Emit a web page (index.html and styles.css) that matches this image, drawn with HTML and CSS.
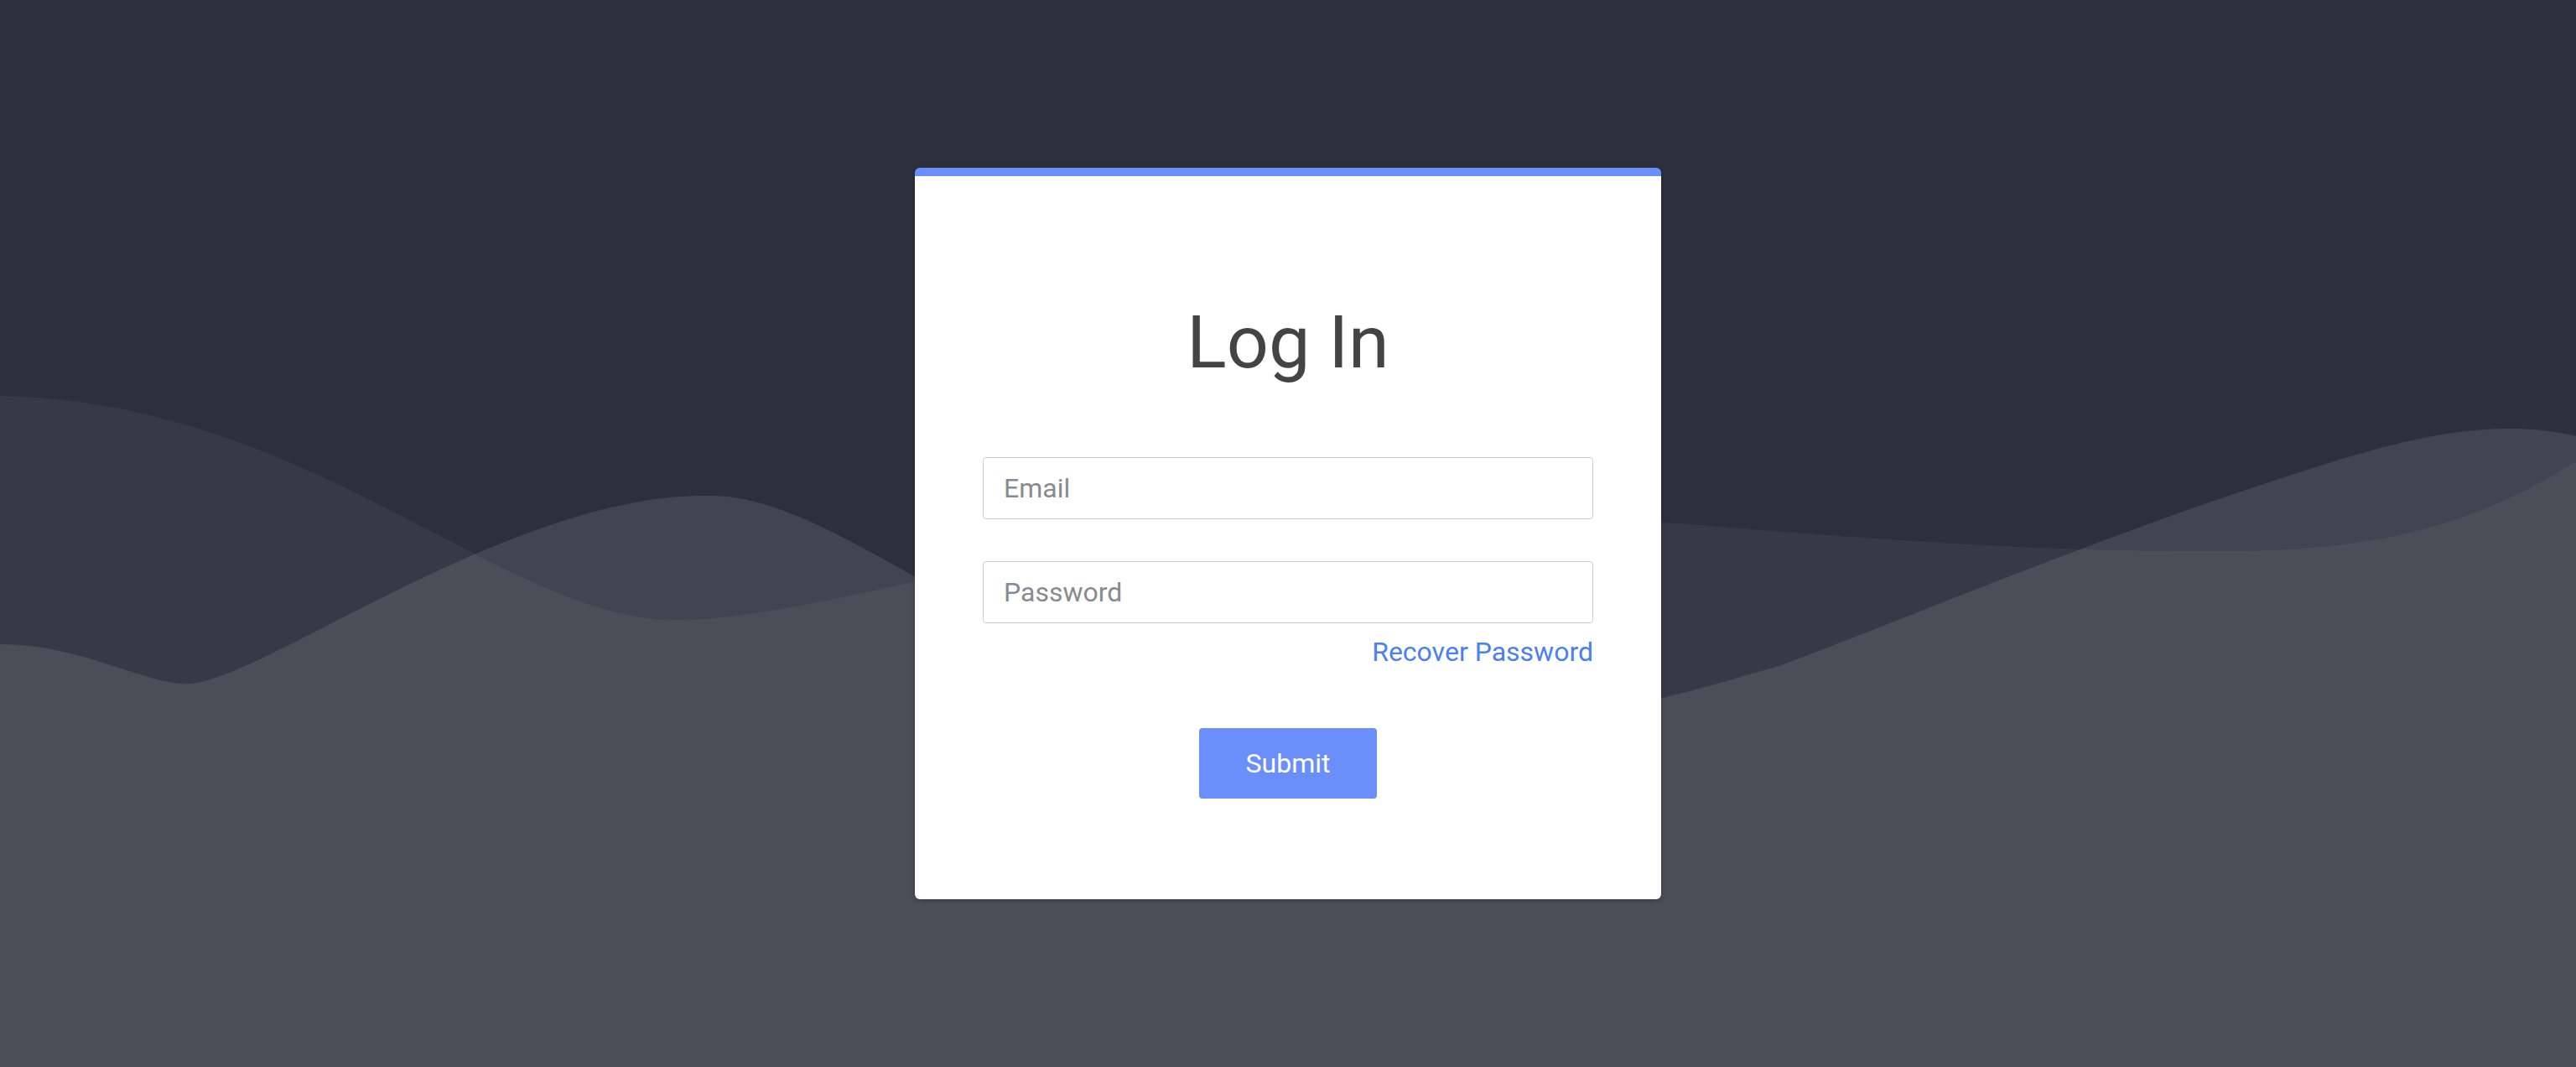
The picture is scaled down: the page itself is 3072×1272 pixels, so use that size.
FILE: index.html
```html
<!DOCTYPE html>
<html lang="en">
<head>
<meta charset="utf-8">
<title>Log In</title>
<link rel="stylesheet" href="styles.css">
</head>
<body>
<div class="page">
  <svg class="waves" viewBox="0 0 3072 1272" preserveAspectRatio="none" aria-hidden="true">
    <path class="wave-a" d="M0,472 C370,478 600,739 805,739 C1000,739 1350,600 1700,605 C1900,608 2300,660 2647,657 C2800,657 2930,640 3072,550 L3072,1272 L0,1272 Z"/>
    <path class="wave-b" d="M0,768 C100,768 180,820 230,815 C330,800 620,585 849,591 C1000,591 1200,800 1500,860 C1750,890 1900,860 2124,793 C2280,735 2550,620 2800,545 C2900,515 2990,500 3072,520 L3072,1272 L0,1272 Z"/>
  </svg>
  <main class="card">
    <h1 class="title">Log In</h1>
    <form class="form">
      <input class="field" type="email" placeholder="Email">
      <input class="field field-password" type="password" placeholder="Password">
      <div class="recover-row"><a class="recover" href="#">Recover Password</a></div>
      <div class="actions"><button class="submit" type="button">Submit</button></div>
    </form>
  </main>
</div>
</body>
</html>
```

FILE: styles.css
```css
* { box-sizing: border-box; }

html, body {
  margin: 0;
  padding: 0;
  height: 100%;
}

body {
  background: #2e2f3c;
  font-family: Roboto, "Liberation Sans", Arial, sans-serif;
  overflow: hidden;
}

.page {
  position: relative;
  min-height: 100vh;
  display: flex;
  align-items: center;
  justify-content: center;
}

.waves {
  position: absolute;
  inset: 0;
  width: 100%;
  height: 100%;
  display: block;
}

.wave-a { fill: rgba(255, 255, 255, 0.052); }
.wave-b { fill: rgba(255, 255, 255, 0.10); }

.card {
  position: relative;
  width: 890px;
  height: 872px;
  background: #ffffff;
  border-top: 10px solid #6a8ffa;
  border-radius: 6px;
  box-shadow: 0 2px 5px rgba(0, 0, 0, 0.25);
  padding: 0 81px;
  display: flex;
  flex-direction: column;
}

.title {
  margin: 154px 0 0;
  font-size: 88px;
  line-height: 88px;
  font-weight: 400;
  color: #444444;
  text-align: center;
}

.form {
  margin-top: 93px;
  display: flex;
  flex-direction: column;
}

.field {
  width: 100%;
  height: 74px;
  border: 1px solid #cccccc;
  border-radius: 4px;
  padding: 0 24px;
  font-family: Roboto, "Liberation Sans", Arial, sans-serif;
  font-size: 32px;
  color: #444;
  outline: none;
  background: #fff;
}

.field::placeholder { color: #878b90; }

.field-password { margin-top: 50px; }

.recover-row {
  margin-top: 15px;
  display: flex;
  justify-content: flex-end;
  line-height: 38px;
}

.recover {
  font-size: 32px;
  color: #4b80ef;
  text-decoration: none;
}

.actions {
  margin-top: 72px;
  display: flex;
  justify-content: center;
}

.submit {
  width: 212px;
  height: 84px;
  border: none;
  border-radius: 4px;
  background: #6a8ffa;
  color: #ffffff;
  font-family: Roboto, "Liberation Sans", Arial, sans-serif;
  font-size: 32px;
  cursor: pointer;
}
```
